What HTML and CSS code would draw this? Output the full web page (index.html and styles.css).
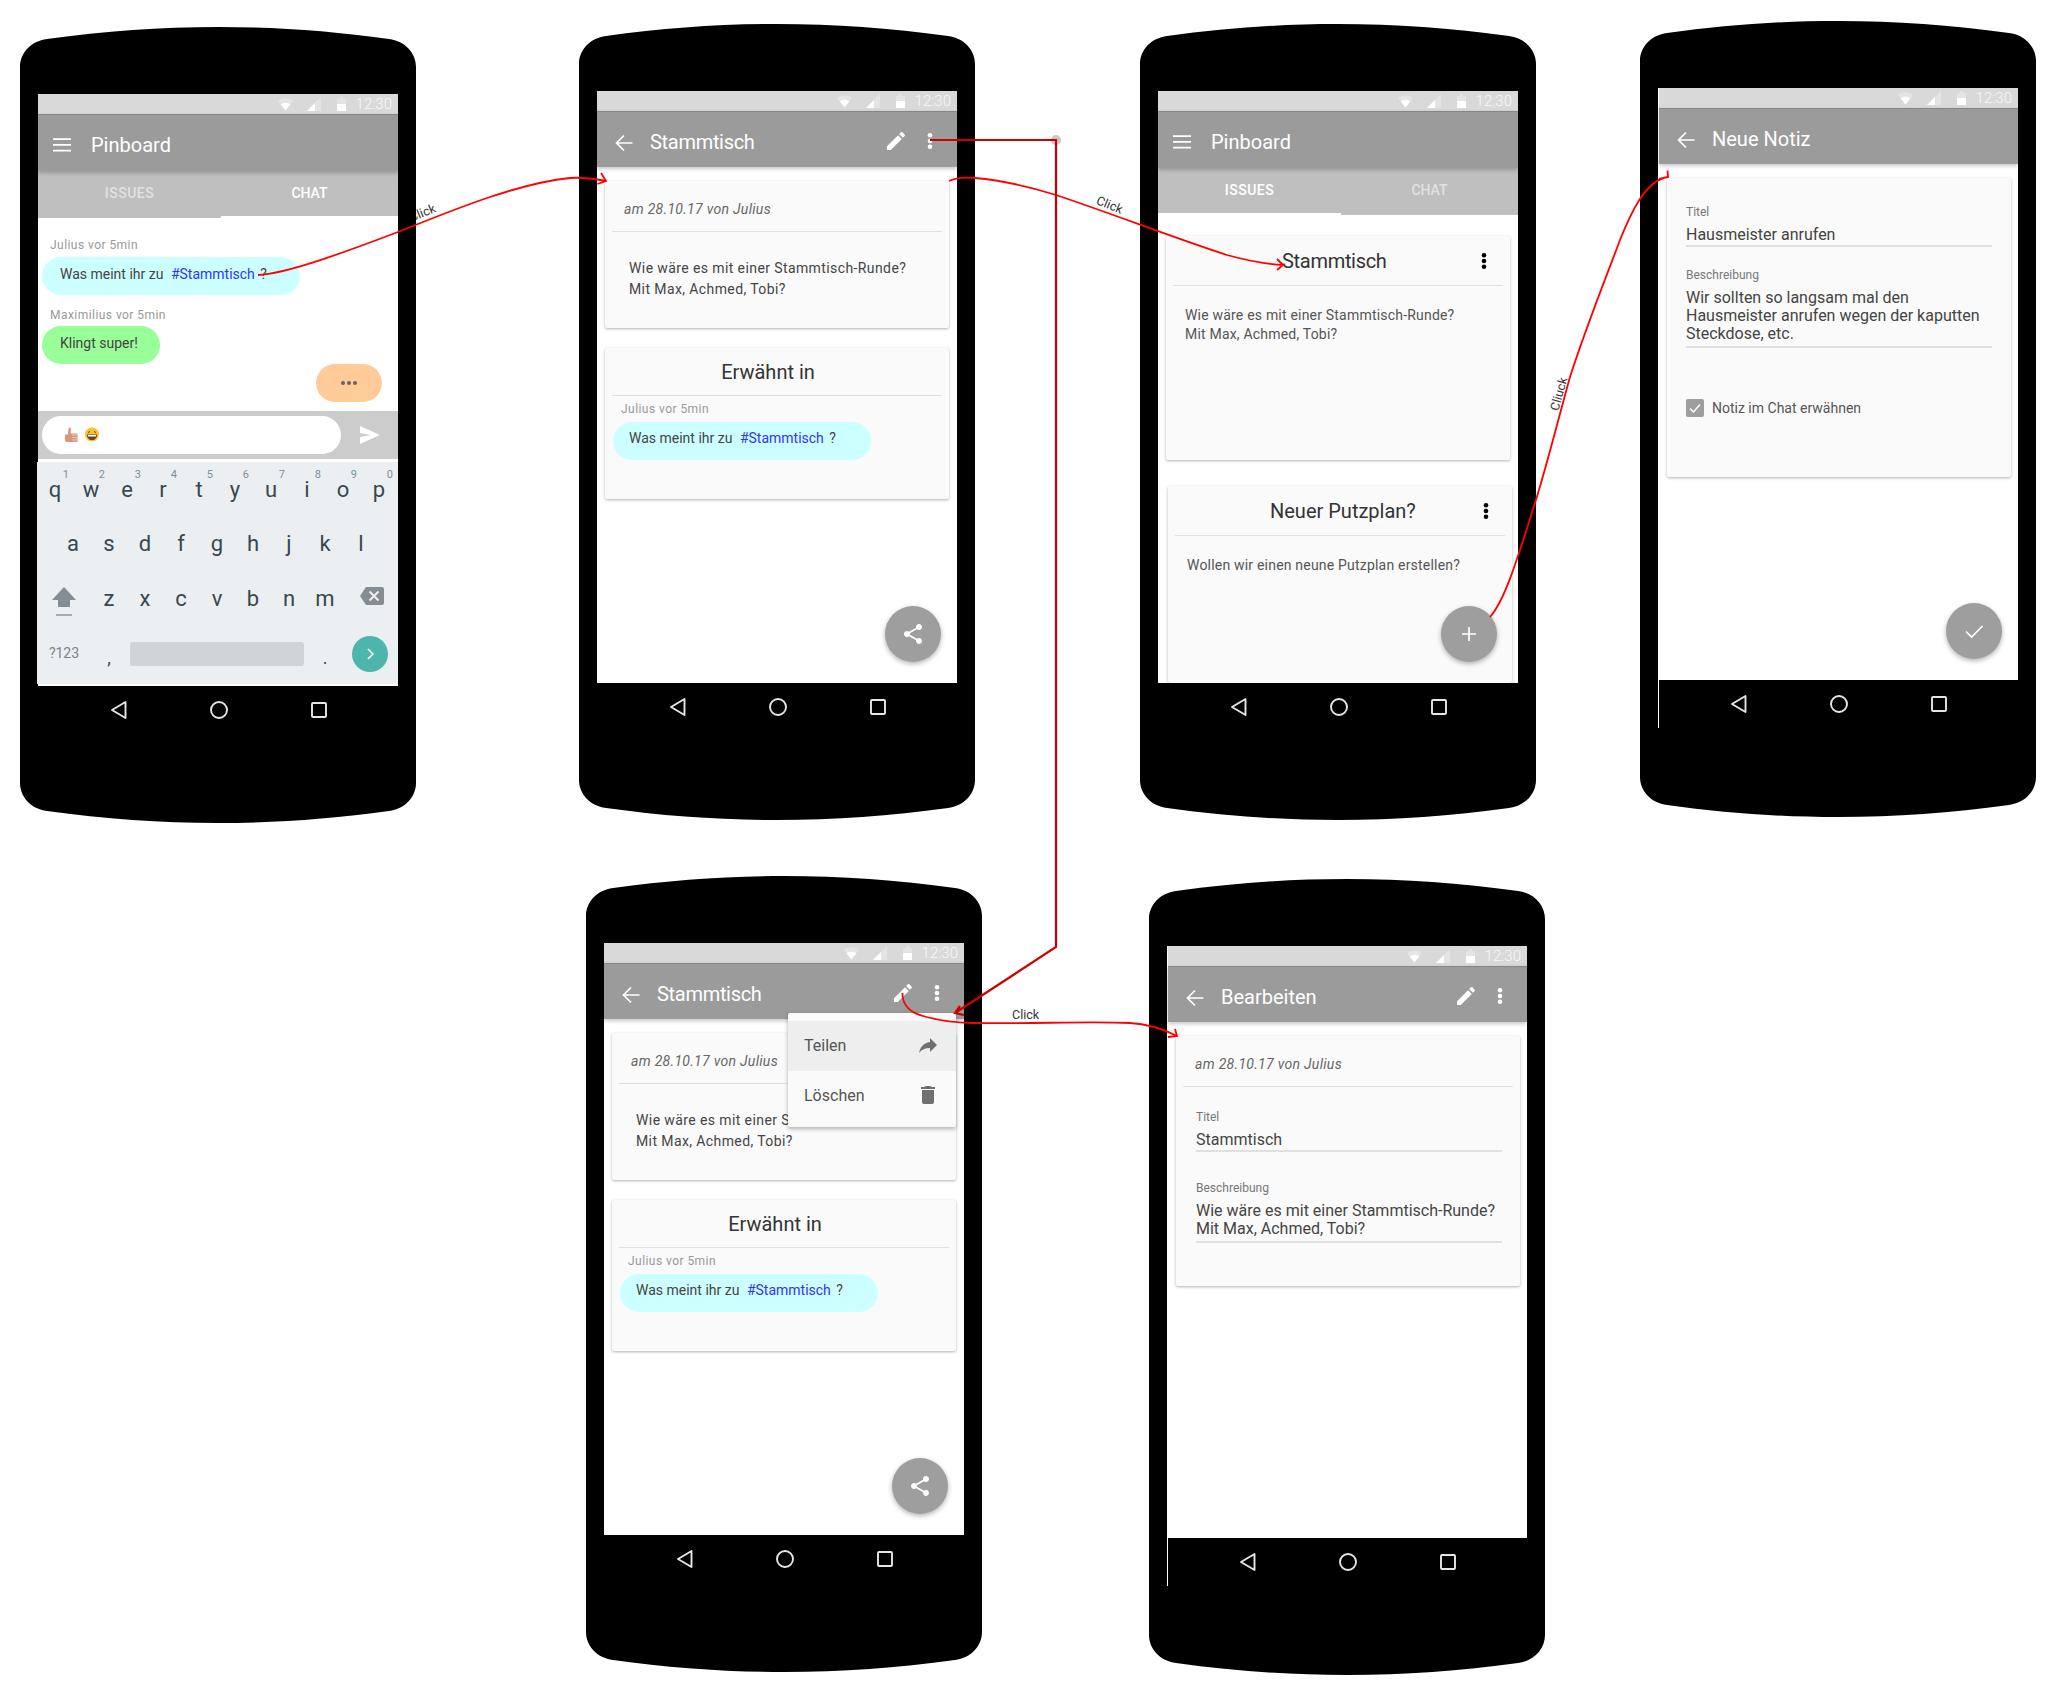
FILE: index.html
```html
<!DOCTYPE html>
<html lang="de">
<head>
    <meta charset="UTF-8">
    <title>Pinboard Wireframes</title>
    <link rel="stylesheet" href="styles.css">
</head>
<body>
    <!-- shared icons -->
    <svg class="sprite" xmlns="http://www.w3.org/2000/svg">
        <symbol id="i-phone" viewBox="0 0 396 796"><path d="M0 40C0 26 11 14 27 12C85 4 140 0 198 0C256 0 311 4 369 12C385 14 396 26 396 40V756C396 770 385 782 369 784C311 792 256 796 198 796C140 796 85 792 27 784C11 782 0 770 0 756Z"/></symbol>
        <symbol id="i-wifi" viewBox="0 0 15 13"><path fill-opacity=".3" d="M7.5 12.5L0 3C2 1.2 4.6 .3 7.5 .3S13 1.2 15 3Z"/><path d="M7.5 12.5L2.7 6.4C4 5.4 5.7 4.8 7.5 4.8S11 5.4 12.3 6.4Z"/></symbol>
        <symbol id="i-signal" viewBox="0 0 14 14"><path fill-opacity=".3" d="M0 14L14 0V14Z"/><path d="M0 14L8 6V14Z"/></symbol>
        <symbol id="i-battery" viewBox="0 0 9 14"><path fill-opacity=".3" d="M3 0H6V2H9V14H0V2H3Z"/><path d="M0 7H9V14H0Z"/></symbol>
        <symbol id="i-menu" viewBox="0 0 24 24"><path d="M3 6.2H21M3 11.9H21M3 17.6H21" stroke="#fff" stroke-width="1.8" fill="none"/></symbol>
        <symbol id="i-back" viewBox="0 0 24 24"><path d="M20.5 12H5M12 4.5L4.5 12L12 19.5" stroke="#fff" stroke-width="1.7" fill="none"/></symbol>
        <symbol id="i-pencil" viewBox="0 0 24 24"><path d="M3 17.25V21h3.75L17.81 9.94l-3.75-3.75L3 17.25zM20.71 7.04c.39-.39.39-1.02 0-1.41l-2.34-2.34c-.39-.39-1.02-.39-1.41 0l-1.83 1.83 3.75 3.75 1.83-1.83z"/></symbol>
        <symbol id="i-dots" viewBox="0 0 24 24"><circle cx="12" cy="6.3" r="2.3"/><circle cx="12" cy="12" r="2.3"/><circle cx="12" cy="17.7" r="2.3"/></symbol>
        <symbol id="i-share" viewBox="0 0 24 24"><path d="M18 16.08c-.76 0-1.44.3-1.96.77L8.91 12.7c.05-.23.09-.46.09-.7s-.04-.47-.09-.7l7.05-4.11c.54.5 1.25.81 2.04.81 1.66 0 3-1.34 3-3s-1.34-3-3-3-3 1.34-3 3c0 .24.04.47.09.7L8.04 9.81C7.5 9.31 6.79 9 6 9c-1.66 0-3 1.34-3 3s1.34 3 3 3c.79 0 1.5-.31 2.04-.81l7.12 4.16c-.05.21-.08.43-.08.65 0 1.61 1.31 2.92 2.92 2.92 1.61 0 2.92-1.31 2.92-2.92s-1.31-2.92-2.92-2.92z"/></symbol>
        <symbol id="i-plus" viewBox="0 0 24 24"><path d="M12 5V19M5 12H19" stroke="#fff" stroke-width="1.7" fill="none"/></symbol>
        <symbol id="i-check" viewBox="0 0 24 24"><path d="M4 12.5L9.6 18L20.5 7" stroke="#fff" stroke-width="1.7" fill="none"/></symbol>
        <symbol id="i-forward" viewBox="0 0 24 24"><path d="M14 9V5l7 7-7 7v-4.1c-5 0-8.5 1.6-11 5.1 1-5 4-10 11-11z"/></symbol>
        <symbol id="i-trash" viewBox="0 0 24 24"><path d="M6 19c0 1.1.9 2 2 2h8c1.1 0 2-.9 2-2V7H6v12zM19 4h-3.5l-1-1h-5l-1 1H5v2h14V4z"/></symbol>
        <symbol id="i-nav-back" viewBox="0 0 20 20"><path d="M16.5 2V18L3 10Z" fill="none" stroke="#e6e6e6" stroke-width="1.9" stroke-linejoin="round"/></symbol>
        <symbol id="i-nav-home" viewBox="0 0 20 20"><circle cx="10" cy="10" r="8" fill="none" stroke="#e6e6e6" stroke-width="1.9"/></symbol>
        <symbol id="i-nav-recent" viewBox="0 0 20 20"><rect x="3" y="3" width="14" height="14" rx="1" fill="none" stroke="#e6e6e6" stroke-width="1.9"/></symbol>
    </svg>

    <!-- labels sit under the phones, the first one is partly covered -->
    <span class="label label-1">Click</span>
    <span class="label label-2">Click</span>
    <span class="label label-3">Cliuck</span>
    <span class="label label-4">Click</span>

    <!-- Chat -->
    <div class="phone phone-1">
        <svg class="phone-shape"><use href="#i-phone"/></svg>
        <div class="screen">
            <div class="status">
                <svg class="st-wifi"><use href="#i-wifi"/></svg>
                <svg class="st-signal"><use href="#i-signal"/></svg>
                <svg class="st-battery"><use href="#i-battery"/></svg>
                <span class="st-time">12:30</span>
            </div>
            <div class="toolbar toolbar-tabs">
                <svg class="icon menu-icon"><use href="#i-menu"/></svg>
                <span class="title">Pinboard</span>
            </div>
            <div class="tabs">
                <div class="tab tab-left">ISSUES</div>
                <div class="tab tab-right active">CHAT</div>
            </div>
            <div class="chat">
                <div class="meta">Julius vor 5min</div>
                <div class="bubble bubble-blue">Was meint ihr zu <span class="tag">#Stammtisch</span> ?</div>
                <div class="meta meta-next">Maximilius vor 5min</div>
                <div class="bubble bubble-green">Klingt super!</div>
                <div class="bubble bubble-orange"><i></i><i></i><i></i></div>
            </div>
            <div class="input-bar">
                <div class="input-pill">
                    <svg class="emoji" viewBox="0 0 36 16">
                        <path d="M1 7.5H4L4.6 1.5C4.7 .2 6.8 .3 6.8 1.8V6.5H13.5V15H3C1.6 15 1 14 1 13Z" fill="#d9977a"/>
                        <path d="M8 8H14M8 10.5H14M8 13H14" stroke="#f2c6b0" stroke-width="1"/>
                        <circle cx="28" cy="7.5" r="7" fill="#fbc02d"/>
                        <path d="M23 7.5H33C33 11 31 13 28 13S23 11 23 7.5Z" fill="#5d4037"/>
                        <path d="M24 8H32V9.5H24Z" fill="#fff"/>
                        <path d="M24 5.5L26 4.5M32 5.5L30 4.5" stroke="#5d4037" stroke-width="1" fill="none"/>
                    </svg>
                </div>
                <svg class="send" viewBox="0 0 20 18"><path d="M0 0L20 9L0 18V11L11 9L0 7Z" fill="#fff"/></svg>
            </div>
            <div class="keyboard">
                <div class="key-row">
                    <span class="key">q<b>1</b></span><span class="key">w<b>2</b></span><span class="key">e<b>3</b></span><span class="key">r<b>4</b></span><span class="key">t<b>5</b></span><span class="key">y<b>6</b></span><span class="key">u<b>7</b></span><span class="key">i<b>8</b></span><span class="key">o<b>9</b></span><span class="key">p<b>0</b></span>
                </div>
                <div class="key-row key-row-2">
                    <span class="key">a</span><span class="key">s</span><span class="key">d</span><span class="key">f</span><span class="key">g</span><span class="key">h</span><span class="key">j</span><span class="key">k</span><span class="key">l</span>
                </div>
                <div class="key-row">
                    <span class="key key-wide"><svg class="shift" viewBox="0 0 24 29"><path d="M12 0L24 13H18V20H6V13H0Z" fill="#848e92"/><rect x="4" y="27" width="16" height="2" fill="#a5adb0"/></svg></span>
                    <span class="key">z</span><span class="key">x</span><span class="key">c</span><span class="key">v</span><span class="key">b</span><span class="key">n</span><span class="key">m</span>
                    <span class="key key-back"><svg class="backspace" viewBox="0 0 24 18"><path d="M6 0H22C23 0 24 1 24 2V16C24 17 23 18 22 18H6L0 9Z" fill="#848e92"/><path d="M9.5 4.5L18.5 13.5M18.5 4.5L9.5 13.5" stroke="#eceff1" stroke-width="2"/></svg></span>
                </div>
                <div class="key-row key-row-4">
                    <span class="key key-wide key-sym">?123</span>
                    <span class="key key-mark">,</span>
                    <span class="space-bar"></span>
                    <span class="key key-mark key-dot">.</span>
                    <span class="go"><svg viewBox="0 0 24 24"><path d="M9.5 6L15.5 12L9.5 18" stroke="#fff" stroke-width="2" fill="none"/></svg></span>
                </div>
            </div>
        </div>
        <div class="nav">
            <svg><use href="#i-nav-back"/></svg><svg><use href="#i-nav-home"/></svg><svg><use href="#i-nav-recent"/></svg>
        </div>
    </div>

    <!-- Issue detail -->
    <div class="phone phone-2">
        <svg class="phone-shape"><use href="#i-phone"/></svg>
        <div class="screen">
            <div class="status">
                <svg class="st-wifi"><use href="#i-wifi"/></svg>
                <svg class="st-signal"><use href="#i-signal"/></svg>
                <svg class="st-battery"><use href="#i-battery"/></svg>
                <span class="st-time">12:30</span>
            </div>
            <div class="toolbar">
                <svg class="icon back-icon"><use href="#i-back"/></svg>
                <span class="title title-tight">Stammtisch</span>
                <div class="actions">
                    <svg class="icon"><use href="#i-pencil"/></svg>
                    <svg class="icon"><use href="#i-dots"/></svg>
                </div>
            </div>
            <div class="content">
                <div class="card card-detail">
                    <div class="card-head head-date"><em>am 28.10.17 von Julius</em></div>
                    <p class="card-text">Wie wäre es mit einer Stammtisch-Runde?<br>Mit Max, Achmed, Tobi?</p>
                </div>
                <div class="card card-mention">
                    <div class="card-head head-mention">Erwähnt in</div>
                    <div class="meta">Julius vor 5min</div>
                    <div class="bubble bubble-blue">Was meint ihr zu <span class="tag">#Stammtisch</span> ?</div>
                </div>
            </div>
            <div class="fab"><svg><use href="#i-share"/></svg></div>
        </div>
        <div class="nav">
            <svg><use href="#i-nav-back"/></svg><svg><use href="#i-nav-home"/></svg><svg><use href="#i-nav-recent"/></svg>
        </div>
    </div>

    <!-- Issue list -->
    <div class="phone phone-3">
        <svg class="phone-shape"><use href="#i-phone"/></svg>
        <div class="screen">
            <div class="status">
                <svg class="st-wifi"><use href="#i-wifi"/></svg>
                <svg class="st-signal"><use href="#i-signal"/></svg>
                <svg class="st-battery"><use href="#i-battery"/></svg>
                <span class="st-time">12:30</span>
            </div>
            <div class="toolbar toolbar-tabs">
                <svg class="icon menu-icon"><use href="#i-menu"/></svg>
                <span class="title">Pinboard</span>
            </div>
            <div class="tabs">
                <div class="tab tab-left active">ISSUES</div>
                <div class="tab tab-right">CHAT</div>
            </div>
            <div class="content content-list">
                <div class="card card-issue">
                    <div class="card-head head-issue"><span class="issue-title">Stammtisch</span><svg class="icon"><use href="#i-dots"/></svg></div>
                    <p class="issue-text">Wie wäre es mit einer Stammtisch-Runde?<br>Mit Max, Achmed, Tobi?</p>
                </div>
                <div class="card card-issue-2">
                    <div class="card-head head-issue"><span class="issue-title issue-title-2">Neuer Putzplan?</span><svg class="icon"><use href="#i-dots"/></svg></div>
                    <p class="issue-text">Wollen wir einen neune Putzplan erstellen?</p>
                </div>
            </div>
            <div class="fab fab-list"><svg><use href="#i-plus"/></svg></div>
        </div>
        <div class="nav">
            <svg><use href="#i-nav-back"/></svg><svg><use href="#i-nav-home"/></svg><svg><use href="#i-nav-recent"/></svg>
        </div>
    </div>

    <!-- New note -->
    <div class="phone phone-4">
        <svg class="phone-shape"><use href="#i-phone"/></svg>
        <div class="screen screen-edge">
            <div class="status">
                <svg class="st-wifi"><use href="#i-wifi"/></svg>
                <svg class="st-signal"><use href="#i-signal"/></svg>
                <svg class="st-battery"><use href="#i-battery"/></svg>
                <span class="st-time">12:30</span>
            </div>
            <div class="toolbar">
                <svg class="icon back-icon"><use href="#i-back"/></svg>
                <span class="title">Neue Notiz</span>
            </div>
            <div class="content">
                <div class="card card-form">
                    <div class="form">
                        <div class="field">
                            <label>Titel</label>
                            <div class="value">Hausmeister anrufen</div>
                        </div>
                        <div class="field">
                            <label>Beschreibung</label>
                            <div class="value value-long">Wir sollten so langsam mal den<br>Hausmeister anrufen wegen der kaputten<br>Steckdose, etc.</div>
                        </div>
                    </div>
                    <div class="check-row">
                        <span class="checkbox"><svg viewBox="0 0 18 18"><path d="M4 9.5L7.5 13L14 5.5" stroke="#fff" stroke-width="1.5" fill="none"/></svg></span>
                        Notiz im Chat erwähnen
                    </div>
                </div>
            </div>
            <div class="fab"><svg><use href="#i-check"/></svg></div>
        </div>
        <div class="nav nav-edge">
            <svg><use href="#i-nav-back"/></svg><svg><use href="#i-nav-home"/></svg><svg><use href="#i-nav-recent"/></svg>
        </div>
    </div>

    <!-- Detail with open menu -->
    <div class="phone phone-5">
        <svg class="phone-shape"><use href="#i-phone"/></svg>
        <div class="screen">
            <div class="status">
                <svg class="st-wifi"><use href="#i-wifi"/></svg>
                <svg class="st-signal"><use href="#i-signal"/></svg>
                <svg class="st-battery"><use href="#i-battery"/></svg>
                <span class="st-time">12:30</span>
            </div>
            <div class="toolbar">
                <svg class="icon back-icon"><use href="#i-back"/></svg>
                <span class="title title-tight">Stammtisch</span>
                <div class="actions">
                    <svg class="icon"><use href="#i-pencil"/></svg>
                    <svg class="icon"><use href="#i-dots"/></svg>
                </div>
            </div>
            <div class="content">
                <div class="card card-detail">
                    <div class="card-head head-date"><em>am 28.10.17 von Julius</em></div>
                    <p class="card-text">Wie wäre es mit einer Stammtisch-Runde?<br>Mit Max, Achmed, Tobi?</p>
                </div>
                <div class="card card-mention">
                    <div class="card-head head-mention">Erwähnt in</div>
                    <div class="meta">Julius vor 5min</div>
                    <div class="bubble bubble-blue">Was meint ihr zu <span class="tag">#Stammtisch</span> ?</div>
                </div>
            </div>
            <div class="menu">
                <div class="menu-row menu-row-active">Teilen <svg><use href="#i-forward"/></svg></div>
                <div class="menu-row">Löschen <svg><use href="#i-trash"/></svg></div>
            </div>
            <div class="fab"><svg><use href="#i-share"/></svg></div>
        </div>
        <div class="nav">
            <svg><use href="#i-nav-back"/></svg><svg><use href="#i-nav-home"/></svg><svg><use href="#i-nav-recent"/></svg>
        </div>
    </div>

    <!-- Edit -->
    <div class="phone phone-6">
        <svg class="phone-shape"><use href="#i-phone"/></svg>
        <div class="screen screen-edge">
            <div class="status">
                <svg class="st-wifi"><use href="#i-wifi"/></svg>
                <svg class="st-signal"><use href="#i-signal"/></svg>
                <svg class="st-battery"><use href="#i-battery"/></svg>
                <span class="st-time">12:30</span>
            </div>
            <div class="toolbar">
                <svg class="icon back-icon"><use href="#i-back"/></svg>
                <span class="title">Bearbeiten</span>
                <div class="actions">
                    <svg class="icon"><use href="#i-pencil"/></svg>
                    <svg class="icon"><use href="#i-dots"/></svg>
                </div>
            </div>
            <div class="content">
                <div class="card card-edit">
                    <div class="card-head head-date"><em>am 28.10.17 von Julius</em></div>
                    <div class="form form-edit">
                        <div class="field">
                            <label>Titel</label>
                            <div class="value">Stammtisch</div>
                        </div>
                        <div class="field">
                            <label>Beschreibung</label>
                            <div class="value value-long">Wie wäre es mit einer Stammtisch-Runde?<br>Mit Max, Achmed, Tobi?</div>
                        </div>
                    </div>
                </div>
            </div>
        </div>
        <div class="nav nav-edge">
            <svg><use href="#i-nav-back"/></svg><svg><use href="#i-nav-home"/></svg><svg><use href="#i-nav-recent"/></svg>
        </div>
    </div>

    <!-- click flow arrows over everything -->
    <svg class="links" viewBox="0 0 2056 1696" fill="none">
        <circle cx="1056" cy="140" r="5" fill="#c8c8c8"/>
        <path class="link" d="M258 275C285 274 340 254 398 232C460 207 520 183 570 178C582 177 595 179 606 181M601 173L606 181L597.5 184"/>
        <path class="link" d="M949 181C955 178 965 177 975 178C1010 181 1040 190 1056 195C1110 213 1180 240 1227 255C1245 260 1265 264 1283 265M1277 259L1283 265L1277 270"/>
        <path class="link-dark" d="M930 140H1056V947L955 1013M960 1006L955 1013L964 1015"/>
        <path class="link" d="M902.5 993C902 1006 912 1013 923 1016C940 1021 955 1023 973 1023C1030 1024 1090 1021 1130 1023C1150 1024 1165 1030 1177 1036M1175 1029L1177 1036L1168 1037"/>
        <path class="link" d="M1490 617C1505 600 1517 560 1535 503C1547 465 1558 420 1570 377C1585 330 1605 280 1620 240C1630 215 1645 180 1668 177M1667.5 170.5L1668 177L1659 179"/>
    </svg>
</body>
</html>
```

FILE: styles.css
```css
* {
    box-sizing: border-box;
}
html, body {
    margin: 0;
    padding: 0;
    background-color: #fff;
}
body {
    position: relative;
    width: 2056px;
    height: 1696px;
    overflow: hidden;
    font-family: Roboto, "Liberation Sans", sans-serif;
    color: #444;
}
.sprite {
    position: absolute;
    width: 0;
    height: 0;
}

/* phones lie on a free canvas */
.phone {
    position: absolute;
    width: 396px;
    height: 796px;
    padding: 67px 18px 0;
}
.phone-1 { left: 20px; top: 27px; }
.phone-2 { left: 579px; top: 24px; }
.phone-3 { left: 1140px; top: 24px; }
.phone-4 { left: 1640px; top: 21px; }
.phone-5 { left: 586px; top: 876px; }
.phone-6 { left: 1149px; top: 879px; }
.phone-shape {
    position: absolute;
    left: 0;
    top: 0;
    width: 396px;
    height: 796px;
    fill: #000;
}
.screen {
    position: relative;
    width: 360px;
    height: 592px;
    background-color: #fff;
    display: flex;
    flex-direction: column;
}
.screen-edge .status,
.screen-edge .toolbar {
    margin-left: 1px;
}
.screen-edge .content {
    padding-left: 9px;
}

/* status bar */
.status {
    height: 20px;
    flex: none;
    background-color: #d9d9d9;
    display: flex;
    align-items: center;
    justify-content: flex-end;
    padding-right: 6px;
    fill: #fff;
}
.st-wifi { width: 15px; height: 13px; }
.st-signal { width: 14px; height: 14px; margin-left: 14px; }
.st-battery { width: 9px; height: 14px; margin-left: 16px; }
.st-time {
    margin-left: 10px;
    font-size: 15px;
    font-weight: 300;
    color: rgba(255, 255, 255, 0.85);
    line-height: 20px;
}

/* toolbar */
.toolbar {
    position: relative;
    z-index: 2;
    height: 56px;
    flex: none;
    background-color: #9b9b9b;
    border-top: 1px solid #858585;
    display: flex;
    align-items: center;
    padding: 5px 15px 0 0;
    color: #fff;
    fill: #fff;
    box-shadow: 0 2px 4px rgba(0, 0, 0, 0.22);
}
.toolbar-tabs {
    height: 57px;
    padding-top: 3px;
}
.icon {
    width: 24px;
    height: 24px;
    flex: none;
}
.menu-icon { margin-left: 12px; }
.back-icon { margin-left: 15px; margin-right: -3px; margin-top: 2px; }
.title {
    margin-left: 17px;
    font-size: 20px;
    line-height: 24px;
}
.title-tight {
    letter-spacing: -0.3px;
}
.actions {
    margin-left: auto;
    margin-top: -3px;
    display: flex;
    gap: 10px;
}

/* tabs */
.tabs {
    height: 47px;
    flex: none;
    display: flex;
    background-color: #bfbfbf;
}
.tab {
    font-size: 14px;
    font-weight: 500;
    color: rgba(255, 255, 255, 0.55);
    text-align: center;
    line-height: 44px;
}
.tab-left { width: 183px; letter-spacing: 0.5px; }
.tab-right { width: 177px; }
.tab.active {
    color: #fff;
    border-bottom: 2px solid #fff;
}

/* chat */
.chat {
    flex: 1;
    padding: 20px 4px 0;
    display: flex;
    flex-direction: column;
    align-items: flex-start;
}
.meta {
    height: 14px;
    font-size: 12px;
    line-height: 14px;
    letter-spacing: 0.45px;
    color: #999;
    margin-left: 8px;
}
.meta-next {
    margin-top: 13px;
}
.bubble {
    height: 38px;
    margin-top: 5px;
    border-radius: 19px;
    padding: 0 0 4px 18px;
    display: flex;
    align-items: center;
    gap: 4px;
    white-space: pre;
    font-size: 14px;
    color: #444;
}
.bubble-blue {
    width: 258px;
    background-color: #ccffff;
}
.bubble-green {
    width: 118px;
    background-color: #99ff99;
    margin-top: 4px;
}
.bubble-orange {
    width: 66px;
    margin: 0 12px 0 auto;
    padding: 0;
    justify-content: center;
    gap: 2px;
    background-color: #ffcc99;
}
.bubble-orange i {
    width: 4px;
    height: 4px;
    border-radius: 50%;
    background-color: #666;
}
.tag {
    color: #3333ff;
    margin-right: -2px;
}

/* message input */
.input-bar {
    height: 48px;
    flex: none;
    margin-bottom: 3px;
    padding: 5px 4px;
    background-color: #cccccc;
    display: flex;
    align-items: center;
}
.input-pill {
    width: 299px;
    height: 38px;
    border-radius: 19px;
    background-color: #fff;
    display: flex;
    align-items: center;
    padding: 0 0 0 22px;
}
.emoji {
    width: 36px;
    height: 16px;
}
.send {
    width: 20px;
    height: 18px;
    margin: 0 0 0 19px;
}

/* keyboard */
.keyboard {
    width: 361px;
    height: 222px;
    flex: none;
    margin: 0 0 2px -1px;
    background-color: #eceff1;
    color: #37474f;
}
.key-row {
    height: 55px;
    display: flex;
    padding-top: 1px;
}
.key-row-2 {
    height: 54px;
    padding-left: 18px;
}
.key {
    position: relative;
    width: 36px;
    flex: none;
    display: flex;
    align-items: center;
    justify-content: center;
    padding-bottom: 2px;
    font-size: 22px;
}
.key b {
    position: absolute;
    right: 4px;
    top: 5px;
    font-size: 11px;
    font-weight: 400;
    color: #78909c;
}
.key-wide {
    width: 54px;
}
.key-back {
    width: 58px;
}
.shift {
    width: 24px;
    height: 29px;
    margin-top: 7px;
}
.backspace {
    width: 24px;
    height: 18px;
    margin-bottom: 5px;
}
.key-row-4 {
    align-items: flex-start;
    height: 58px;
    padding-top: 10px;
}
.key-sym {
    height: 36px;
    font-size: 14px;
    color: #78848a;
}
.key-mark {
    height: 44px;
    font-size: 18px;
}
.space-bar {
    width: 174px;
    height: 24px;
    margin: 6px 3px 0;
    border-radius: 3px;
    background-color: #d0d4d7;
}
.go {
    width: 36px;
    height: 36px;
    margin-left: 9px;
    border-radius: 50%;
    background-color: #4db6ac;
    display: flex;
    align-items: center;
    justify-content: center;
}
.go svg {
    width: 20px;
    height: 20px;
}

/* android nav */
.nav {
    position: relative;
    height: 48px;
    display: flex;
    align-items: center;
    gap: 80px;
    padding-left: 71px;
}
.nav svg {
    width: 20px;
    height: 20px;
}
.nav-edge {
    border-left: 1px solid #fff;
    padding-left: 70px;
}

/* cards */
.content {
    flex: 1;
    min-height: 0;
    overflow: hidden;
    padding: 14px 8px 4px;
}
.content-list {
    padding-top: 21px;
    padding-bottom: 0;
}
.card {
    width: 344px;
    background-color: #fafafa;
    border-radius: 2px;
    box-shadow: 0 1px 3px rgba(0, 0, 0, 0.3);
}
.card-head {
    width: 330px;
    margin-left: 7px;
    border-bottom: 1px solid #e0e0e0;
    display: flex;
    align-items: center;
}
.head-date {
    height: 51px;
    padding: 5px 0 0 12px;
    font-size: 14px;
    letter-spacing: 0.3px;
    color: #666;
}
.head-mention {
    height: 48px;
    justify-content: center;
    padding-right: 18px;
    font-size: 20px;
    color: #333;
}
.head-issue {
    height: 50px;
    font-size: 20px;
    color: #333;
    fill: #000;
}
.issue-title {
    flex: 1;
    padding-left: 109px;
    letter-spacing: -0.3px;
}
.issue-title-2 {
    padding-left: 95px;
    letter-spacing: 0;
}
.head-issue .icon {
    margin-right: 7px;
}
.card-detail {
    height: 147px;
}
.card-text {
    margin: 26px 0 0 24px;
    font-size: 14px;
    line-height: 21px;
    letter-spacing: 0.4px;
}
.card-mention {
    height: 151px;
    margin-top: 20px;
    padding-top: 0;
}
.card-mention .meta {
    margin: 6px 0 0 16px;
}
.card-mention .bubble {
    margin: 6px 0 0 8px;
    padding-left: 16px;
    padding-bottom: 7px;
}
.card-issue {
    height: 224px;
}
.card-issue-2 {
    height: 197px;
    margin: 26px 0 0 2px;
}
.issue-text {
    margin: 20px 0 0 19px;
    font-size: 14px;
    line-height: 19px;
    letter-spacing: 0.2px;
    color: #555;
}

/* forms */
.form {
    padding: 27px 0 0 19px;
}
.form-edit {
    padding: 23px 0 0 20px;
}
.field label {
    display: block;
    height: 14px;
    font-size: 12px;
    line-height: 14px;
    color: #777;
}
.field + .field {
    margin-top: 21px;
}
.form-edit .field + .field {
    margin-top: 29px;
}
.value {
    width: 306px;
    margin-top: 7px;
    padding-bottom: 1px;
    font-size: 16px;
    line-height: 18px;
    color: #444;
    border-bottom: 2px solid #e0e0e0;
}
.value-long {
    padding-bottom: 3px;
}
.card-form {
    height: 299px;
}
.card-edit {
    height: 250px;
}
.check-row {
    margin: 51px 0 0 19px;
    display: flex;
    align-items: center;
    gap: 8px;
    font-size: 14px;
    color: #555;
}
.checkbox {
    width: 18px;
    height: 18px;
    border-radius: 2px;
    background-color: #9e9e9e;
}
.checkbox svg {
    display: block;
}

/* floating button and overflow menu lie over the content */
.fab {
    position: absolute;
    right: 16px;
    bottom: 21px;
    width: 56px;
    height: 56px;
    border-radius: 50%;
    background-color: #9e9e9e;
    box-shadow: 0 2px 5px rgba(0, 0, 0, 0.3);
    display: flex;
    align-items: center;
    justify-content: center;
    fill: #fff;
}
.fab-list {
    right: 21px;
}
.fab svg {
    width: 24px;
    height: 24px;
}
.menu {
    position: absolute;
    z-index: 3;
    left: 184px;
    top: 70px;
    width: 168px;
    height: 114px;
    padding-top: 8px;
    background-color: #fafafa;
    border-radius: 2px;
    box-shadow: 0 2px 4px rgba(0, 0, 0, 0.3);
}
.menu-row {
    height: 50px;
    display: flex;
    align-items: center;
    justify-content: space-between;
    padding: 0 16px 2px;
    font-size: 16px;
    color: #555;
    fill: #707070;
}
.menu-row svg {
    width: 24px;
    height: 24px;
}
.menu-row-active {
    background-color: #eeeeee;
}

/* flow links and their labels */
.links {
    position: absolute;
    z-index: 5;
    left: 0;
    top: 0;
    width: 2056px;
    height: 1696px;
    pointer-events: none;
}
.link {
    stroke: #ff0000;
    stroke-width: 1.8;
}
.link-dark {
    stroke: #cc0000;
    stroke-width: 2.2;
}
.label {
    position: absolute;
    font-size: 12.5px;
    line-height: 14px;
    color: #333;
}
.label-1 { left: 409px; top: 206px; transform: rotate(-22deg); }
.label-2 { left: 1096px; top: 198px; transform: rotate(22deg); }
.label-3 { left: 1542px; top: 387px; transform: rotate(-74deg); }
.label-4 { left: 1012px; top: 1008px; }
```
